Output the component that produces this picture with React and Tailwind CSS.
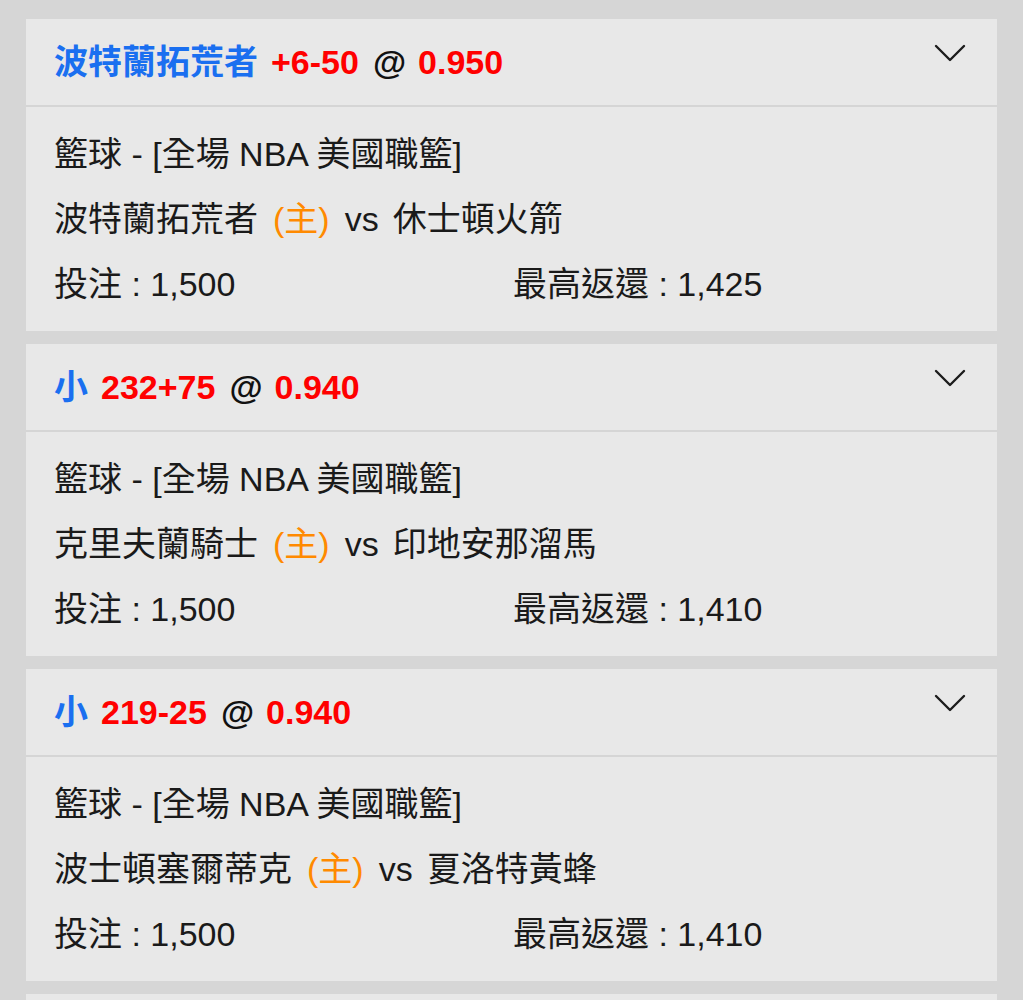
const bets = [
    {
        pick: '波特蘭拓荒者',
        line: '+6-50',
        odds: '0.950',
        home: '波特蘭拓荒者',
        away: '休士頓火箭',
        stake: '1,500',
        maxReturn: '1,425',
    },
    {
        pick: '小',
        line: '232+75',
        odds: '0.940',
        home: '克里夫蘭騎士',
        away: '印地安那溜馬',
        stake: '1,500',
        maxReturn: '1,410',
    },
    {
        pick: '小',
        line: '219-25',
        odds: '0.940',
        home: '波士頓塞爾蒂克',
        away: '夏洛特黃蜂',
        stake: '1,500',
        maxReturn: '1,410',
    },
    {
        pick: '大',
        line: '221+50',
        odds: '0.940',
        home: '邁阿密熱火',
        away: '紐約尼克',
        stake: '1,500',
        maxReturn: '1,410',
    },
];

function Chevron() {
    return (
        <svg width="32" height="18" viewBox="0 0 32 18" fill="none" className="mt-[25px] mr-[31px] shrink-0">
            <polyline points="2,2 16,16 30,2" stroke="#1c1c1c" strokeWidth="2.4" strokeLinecap="round" strokeLinejoin="round" />
        </svg>
    );
}

function BetCard({ bet }) {
    return (
        <div className="bg-[#e8e8e8] shrink-0">
            {/* header */}
            <div className="flex h-[88px] justify-between border-b-2 border-[#d5d5d5]">
                <div className="flex items-center pl-[28px] text-[34px] font-bold whitespace-nowrap">
                    <span className="text-[#1a6ff0]">{bet.pick}</span>
                    <span className="ml-[13px] text-[#ff0000]">{bet.line}</span>
                    <span className="ml-[14px] text-[#111]">@</span>
                    <span className="ml-[12px] text-[#ff0000]">{bet.odds}</span>
                </div>
                <Chevron />
            </div>

            {/* body */}
            <div className="pl-[28px] pt-[15px] pb-[14px] text-[34px] leading-[65px] text-[#1a1a1a]">
                <div>籃球 - [全場 NBA 美國職籃]</div>
                <div className="flex whitespace-nowrap">
                    <span>{bet.home}</span>
                    <span className="ml-[15px] text-[#ff8a00]">(主)</span>
                    <span className="ml-[15px]">vs</span>
                    <span className="ml-[14px]">{bet.away}</span>
                </div>
                <div className="flex">
                    <div className="w-[459px]">投注 : {bet.stake}</div>
                    <div>最高返還 : {bet.maxReturn}</div>
                </div>
            </div>
        </div>
    );
}

export default function App() {
    return (
        <div
            className="h-[1000px] overflow-hidden bg-[#d6d6d6] px-[26px] pt-[19px] flex flex-col gap-[13px]"
            style={{ fontFamily: '"Liberation Sans", "Noto Sans CJK TC", sans-serif' }}
        >
            {bets.map((bet, index) => (
                <BetCard key={index} bet={bet} />
            ))}
        </div>
    );
}
